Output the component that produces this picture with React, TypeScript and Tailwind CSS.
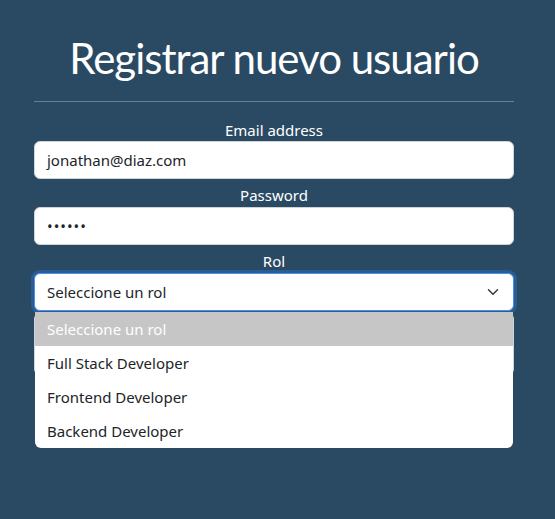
const ROLES = ['Full Stack Developer', 'Frontend Developer', 'Backend Developer']

function Chevron() {
  return (
    <svg width="12" height="12" viewBox="0 0 16 16" fill="none" stroke="#343a40" strokeWidth="2" strokeLinecap="round" strokeLinejoin="round">
      <path d="m2 5 6 6 6-6" />
    </svg>
  )
}

export default function App() {
  return (
    <div className="min-h-[519px] bg-[#2a4a63] font-['Noto_Sans',sans-serif]">
      <div className="ml-[34px] w-[480px] pt-[34px]">
        <h1 className="text-center font-['Lato',sans-serif] text-[42px] leading-[48px] tracking-[-1px] text-white">Registrar nuevo usuario</h1>
        <hr className="mt-[19px] border-t border-[#687f93]" />

        {/* Email */}
        <label className="mt-[18px] block text-center text-[15px] leading-[20px] text-white">Email address</label>
        <div className="mt-[1px] flex h-[38px] items-center rounded-md border border-[#ced4da] bg-white px-3 text-[15px] text-[#212529]">
          jonathan@diaz.com
        </div>

        {/* Password */}
        <label className="mt-[6px] block text-center text-[15px] leading-[20px] text-white">Password</label>
        <div className="mt-[2px] flex h-[38px] items-center rounded-md border border-[#ced4da] bg-white px-3 text-[15px] tracking-[1px] text-[#212529]">
          ••••••
        </div>

        {/* Rol */}
        <label className="mt-[6px] block text-center text-[15px] leading-[20px] text-white">Rol</label>
        <div className="relative mt-[2px]">
          <div className="flex h-[38px] items-center justify-between rounded-md border border-[#4d8fe8] bg-white px-3 text-[15px] text-[#212529] ring-[3px] ring-[#2a5d94]">
            <span>Seleccione un rol</span>
            <span className="mr-[2px]"><Chevron /></span>
          </div>

          {/* button hidden behind the open list */}
          <div className="mt-[2px] h-[62px] rounded-md border border-[#ced4da] bg-white" />

          <ul className="absolute left-[1px] right-[1px] top-[39px] overflow-hidden rounded-b-md bg-white text-[15px] text-[#212529]">
            <li className="flex h-[34px] items-center bg-[#c6c6c6] px-3 text-white">Seleccione un rol</li>
            {ROLES.map((r) => (
              <li key={r} className="flex h-[34px] items-center px-3">{r}</li>
            ))}
          </ul>
        </div>
      </div>
    </div>
  )
}
